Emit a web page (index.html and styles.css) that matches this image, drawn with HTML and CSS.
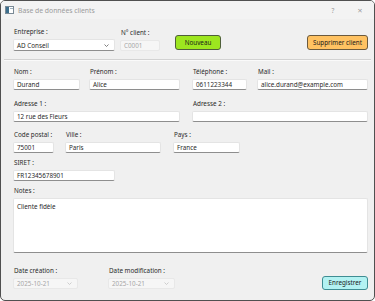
FILE: index.html
```html
<!DOCTYPE html>
<html lang="fr">
<head>
<meta charset="utf-8">
<title>Base de données clients</title>
<link rel="stylesheet" href="styles.css">
</head>
<body>
<div class="window">
  <div class="titlebar">
    <svg class="app-icon" width="9" height="8" viewBox="0 0 9 8">
      <rect x="0.5" y="0.5" width="8" height="7" fill="#ffffff" stroke="#7a8a96"/>
      <rect x="1" y="1" width="3" height="6" fill="#3c6e8c"/>
      <rect x="5" y="2" width="3" height="1" fill="#9fb3c0"/>
    </svg>
    <span class="title">Base de données clients</span>
    <span class="tb-help">?</span>
    <span class="tb-close">✕</span>
  </div>
  <div class="content">
    <div class="row row-top">
      <div class="field w-ent">
        <div class="label">Entreprise :</div>
        <div class="combo"><span>AD Conseil</span>
          <svg class="chev" width="5" height="3" viewBox="0 0 5 3"><path d="M0.5 0.5 L2.5 2.5 L4.5 0.5" fill="none" stroke="#606060" stroke-width="0.8"/></svg>
        </div>
      </div>
      <div class="field w-num">
        <div class="label">N° client :</div>
        <div class="input disabled">C0001</div>
      </div>
      <button class="btn btn-new">Nouveau</button>
      <button class="btn btn-del">Supprimer client</button>
    </div>
    <div class="separator"></div>
    <div class="row row-a">
      <div class="field w-nom"><div class="label">Nom :</div><div class="input">Durand</div></div>
      <div class="field w-prenom"><div class="label">Prénom :</div><div class="input">Alice</div></div>
      <div class="field w-tel"><div class="label">Téléphone :</div><div class="input">0611223344</div></div>
      <div class="field w-mail"><div class="label">Mail :</div><div class="input">alice.durand@example.com</div></div>
    </div>
    <div class="row row-b">
      <div class="field w-adr1"><div class="label">Adresse 1 :</div><div class="input">12 rue des Fleurs</div></div>
      <div class="field w-adr2"><div class="label">Adresse 2 :</div><div class="input"></div></div>
    </div>
    <div class="row row-c">
      <div class="field w-cp"><div class="label">Code postal :</div><div class="input">75001</div></div>
      <div class="field w-ville"><div class="label">Ville :</div><div class="input">Paris</div></div>
      <div class="field w-pays"><div class="label">Pays :</div><div class="input">France</div></div>
    </div>
    <div class="row row-d">
      <div class="field w-siret"><div class="label">SIRET :</div><div class="input">FR12345678901</div></div>
    </div>
    <div class="row row-notes">
      <div class="field w-notes"><div class="label">Notes :</div><div class="textarea">Cliente fidèle</div></div>
    </div>
    <div class="row row-dates">
      <div class="field w-date1">
        <div class="label">Date création :</div>
        <div class="combo disabled"><span>2025-10-21</span>
          <svg class="chev" width="5" height="3" viewBox="0 0 5 3"><path d="M0.5 0.5 L2.5 2.5 L4.5 0.5" fill="none" stroke="#c4c4c4" stroke-width="0.8"/></svg>
        </div>
      </div>
      <div class="field w-date2">
        <div class="label">Date modification :</div>
        <div class="combo disabled"><span>2025-10-21</span>
          <svg class="chev" width="5" height="3" viewBox="0 0 5 3"><path d="M0.5 0.5 L2.5 2.5 L4.5 0.5" fill="none" stroke="#c4c4c4" stroke-width="0.8"/></svg>
        </div>
      </div>
      <button class="btn btn-save">Enregistrer</button>
    </div>
  </div>
</div>
</body>
</html>
```

FILE: styles.css
```css
* { box-sizing: border-box; }
html, body { margin: 0; padding: 0; background: #ffffff; }
body {
  font-family: "Noto Sans", "Open Sans", "DejaVu Sans", sans-serif;
  font-size: 6.3px;
  color: #2a2a2a;
}
.window {
  width: 375px;
  height: 301px;
  border: 1px solid #505050;
  border-radius: 5px;
  background: #f0f0f0;
  overflow: hidden;
  display: flex;
  flex-direction: column;
}
.titlebar {
  height: 18px;
  flex: none;
  display: flex;
  align-items: center;
  padding-left: 4px;
  padding-right: 9px;
  background: #f3f3f3;
  color: #9a9a9a;
}
.app-icon { flex: none; }
.title { margin-left: 4px; font-size: 6.8px; }
.tb-help { margin-left: auto; width: 10px; text-align: center; font-size: 6.5px; }
.tb-close { margin-left: 17px; width: 10px; text-align: center; font-size: 6.5px; }
.content {
  flex: 1;
  padding: 0 6px 0 12px;
  display: flex;
  flex-direction: column;
}
.row { display: flex; align-items: flex-end; }
.field { display: flex; flex-direction: column; flex: none; }
.label {
  height: 9px;
  line-height: 9px;
  padding-left: 1px;
  margin-bottom: 3px;
  white-space: nowrap;
}
.input, .combo, .textarea {
  background: #ffffff;
  border: 1px solid #e4e4e4;
  border-bottom-color: #8e8e8e;
  border-radius: 2px;
  height: 11px;
  line-height: 9px;
  padding: 0 3px;
  white-space: nowrap;
  overflow: hidden;
}
.combo {
  display: flex;
  align-items: center;
  justify-content: space-between;
  padding-right: 5px;
}
.combo .chev { flex: none; }
.disabled {
  background: #f6f6f6;
  border-color: #e8e8e8;
  color: #a6a6a6;
}
.textarea {
  height: 55px;
  padding-top: 3px;
  line-height: 9px;
}
.btn {
  flex: none;
  font-family: inherit;
  font-size: 6.3px;
  line-height: 12px;
  height: 15px;
  padding: 0;
  border-radius: 3px;
  color: #1a1a1a;
  cursor: default;
}
.row-top { margin-top: 8px; }
.row-top .combo { height: 12px; }
.w-ent { width: 102px; }
.w-num { width: 40px; margin-left: 5px; }
.btn-new {
  width: 46px;
  margin-left: 15px;
  margin-bottom: 1px;
  background: #9de61f;
  border: 1px solid #4f5f3a;
}
.btn-del {
  width: 61px;
  margin-left: auto;
  margin-bottom: 1px;
  background: #ffc262;
  border: 1px solid #6b5a3e;
}
.separator {
  height: 1px;
  background: #d2d2d2;
  margin: 8px -3px 0 -9px;
  box-shadow: 0 1px 0 #fafafa;
}
.row-a { margin-top: 7px; }
.w-nom { width: 67px; }
.w-prenom { width: 91px; margin-left: 9px; }
.w-tel { width: 55px; margin-left: 12px; }
.w-mail { width: 111px; margin-left: 10px; }
.row-b { margin-top: 9px; }
.w-adr1 { width: 167px; }
.w-adr2 { width: 176px; margin-left: 12px; }
.row-c { margin-top: 8px; }
.w-cp { width: 41px; }
.w-ville { width: 96px; margin-left: 11px; }
.w-pays { width: 67px; margin-left: 12px; }
.row-d { margin-top: 5px; }
.w-siret { width: 102px; }
.row-notes { margin-top: 5px; }
.w-notes { width: 355px; }
.row-dates { margin-top: 13px; }
.w-date1 { width: 65px; }
.w-date2 { width: 67px; margin-left: 30px; }
.btn-save {
  width: 46px;
  height: 14px;
  line-height: 12px;
  margin-left: auto;
  margin-bottom: -1px;
  background: #b3f2f2;
  border: 1px solid #3f8d93;
}
```
